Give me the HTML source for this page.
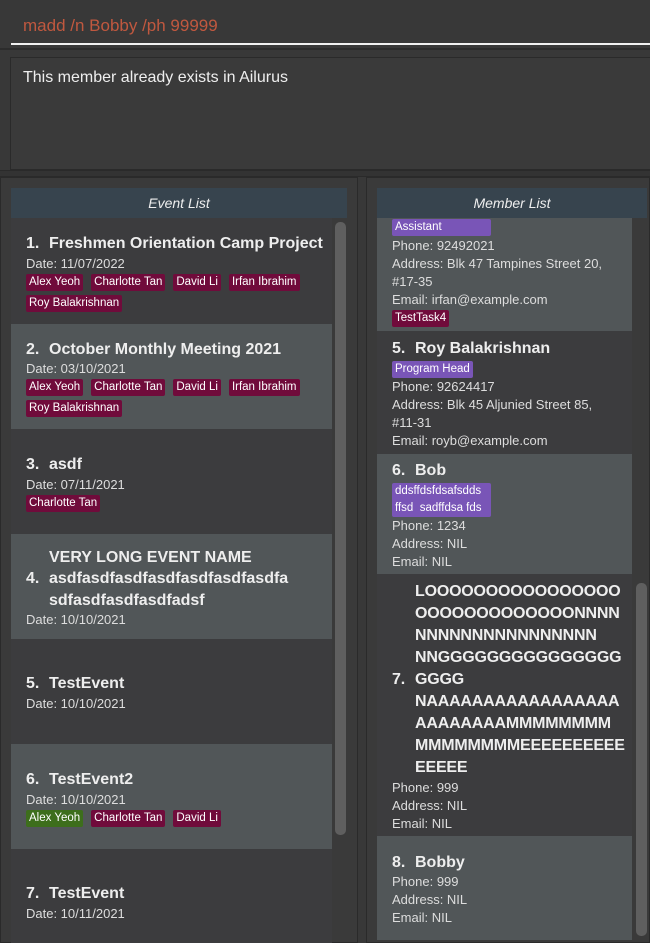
<!DOCTYPE html>
<html><head><meta charset="utf-8"><style>
*{box-sizing:border-box;margin:0;padding:0}
body{width:650px;height:943px;overflow:hidden;background:#383838;font-family:"Liberation Sans","DejaVu Sans",sans-serif;color:#fff;position:relative}
.abs{position:absolute}
.cmd{left:0;top:0;width:650px;height:50px;background:#383838;border-bottom:2px solid #2c2c2c}
.cmd span{position:absolute;left:23px;top:16px;font-size:17px;color:#c0583f}
.cmd i{position:absolute;left:11px;right:0;top:43px;height:2px;background:#f0f0f0}
.res{left:10px;top:57px;width:645px;height:113px;border:1px solid #2a2a2a;background:#3a3a3a}
.res span{position:absolute;left:12px;top:11px;font-size:16px;color:#eee}
.sep{left:0;top:170px;width:650px;height:7px;background:#333;border-top:1px solid #2a2a2a;border-bottom:1px solid #2a2a2a}
.panel{top:177px;height:766px;background:#3a3a3a;border:1px solid #2a2a2a}
.hdr{height:30px;background:#37444e;font-style:italic;font-size:14px;color:#eee;text-align:center;line-height:31px}
.cell{position:absolute;display:flex;flex-direction:column;justify-content:center;padding-left:15px;padding-top:3px}
.d{background:#3c3c3e}.l{background:#515658}
.t{display:flex;align-items:center;font-weight:bold;font-size:16px;line-height:21.5px;color:#eee}
.t b{width:23px;flex:none}
.s{font-size:13px;line-height:18px;color:#ddd}
.tags{display:flex;flex-wrap:wrap;gap:4px 8px;margin-top:1px;width:300px}
.tg{font-size:11.5px;line-height:17px;height:17px;padding:0 3px;border-radius:2px;background:#700b3b;color:#fff}
.g{background:#3d6e1c}.p{background:#7955b7}
.sb{background:#5f5f5f;border-radius:5px;width:11px}
</style></head><body>
<div class="abs cmd"><span>madd /n Bobby /ph 99999</span><i></i></div>
<div class="abs res"><span>This member already exists in Ailurus</span></div>
<div class="abs sep"></div>

<div class="abs panel" style="left:0;width:358px"></div>
<div class="abs hdr" style="left:11px;top:188px;width:336px">Event List</div>
<div class="abs" style="left:11px;top:218px;width:321px;height:725px;overflow:hidden">
 <div class="cell d" style="top:0;height:106px;width:321px"><div class="t"><b>1.</b>Freshmen Orientation Camp Project</div><div class="s">Date: 11/07/2022</div><div class="tags"><span class="tg">Alex Yeoh</span><span class="tg">Charlotte Tan</span><span class="tg">David Li</span><span class="tg">Irfan Ibrahim</span><span class="tg">Roy Balakrishnan</span></div></div>
 <div class="cell l" style="top:106px;height:105px;width:321px"><div class="t"><b>2.</b>October Monthly Meeting 2021</div><div class="s">Date: 03/10/2021</div><div class="tags"><span class="tg">Alex Yeoh</span><span class="tg">Charlotte Tan</span><span class="tg">David Li</span><span class="tg">Irfan Ibrahim</span><span class="tg">Roy Balakrishnan</span></div></div>
 <div class="cell d" style="top:211px;height:105px;width:321px"><div class="t"><b>3.</b>asdf</div><div class="s">Date: 07/11/2021</div><div class="tags"><span class="tg">Charlotte Tan</span></div></div>
 <div class="cell l" style="top:316px;height:105px;width:321px"><div class="t"><b>4.</b><span>VERY LONG EVENT NAME<br>asdfasdfasdfasdfasdfasdfasdfa<br>sdfasdfasdfasdfadsf</span></div><div class="s">Date: 10/10/2021</div></div>
 <div class="cell d" style="top:421px;height:105px;width:321px"><div class="t"><b>5.</b>TestEvent</div><div class="s">Date: 10/10/2021</div></div>
 <div class="cell l" style="top:526px;height:105px;width:321px"><div class="t"><b>6.</b>TestEvent2</div><div class="s">Date: 10/10/2021</div><div class="tags"><span class="tg g">Alex Yeoh</span><span class="tg">Charlotte Tan</span><span class="tg">David Li</span></div></div>
 <div class="cell d" style="top:631px;height:105px;width:321px"><div class="t"><b>7.</b>TestEvent</div><div class="s">Date: 10/11/2021</div></div>
</div>
<div class="abs sb" style="left:335px;top:222px;height:613px"></div>

<div class="abs panel" style="left:366px;width:284px"></div>
<div class="abs hdr" style="left:377px;top:188px;width:270px">Member List</div>
<div class="abs" style="left:377px;top:218px;width:255px;height:725px;overflow:hidden">
 <div class="cell l" style="top:0;height:113px;width:255px;justify-content:flex-end;padding-bottom:4px"><div class="tags"><span class="tg p" style="width:99px">Assistant</span></div><div class="s" style="margin-top:1px">Phone: 92492021<br>Address: Blk 47 Tampines Street 20,<br>#17-35<br>Email: irfan@example.com</div><div class="tags"><span class="tg">TestTask4</span></div></div>
 <div class="cell d" style="top:113px;height:123px;width:255px"><div class="t"><b>5.</b>Roy Balakrishnan</div><div class="tags"><span class="tg p">Program Head</span></div><div class="s">Phone: 92624417<br>Address: Blk 45 Aljunied Street 85,<br>#11-31<br>Email: royb@example.com</div></div>
 <div class="cell l" style="top:236px;height:120px;width:255px"><div class="t"><b>6.</b>Bob</div><div class="tags"><span class="tg p" style="height:34px;width:99px;line-height:17px">ddsffdsfdsafsdds<br>ffsd&nbsp; sadffdsa fds</span></div><div class="s">Phone: 1234<br>Address: NIL<br>Email: NIL</div></div>
 <div class="cell d" style="top:356px;height:262px;width:255px"><div class="t" style="line-height:22px;white-space:nowrap;letter-spacing:-0.2px"><b>7.</b><span>LOOOOOOOOOOOOOOOO<br>OOOOOOOOOOOOONNNN<br>NNNNNNNNNNNNNNNN<br>NNGGGGGGGGGGGGGGG<br>GGGG<br>NAAAAAAAAAAAAAAAAA<br>AAAAAAAAMMMMMMMM<br>MMMMMMMMEEEEEEEEEE<br>EEEEE</span></div><div class="s">Phone: 999<br>Address: NIL<br>Email: NIL</div></div>
 <div class="cell l" style="top:618px;height:104px;width:255px"><div class="t"><b>8.</b>Bobby</div><div class="s">Phone: 999<br>Address: NIL<br>Email: NIL</div></div>
</div>
<div class="abs sb" style="left:636px;top:583px;height:353px"></div>
</body></html>
